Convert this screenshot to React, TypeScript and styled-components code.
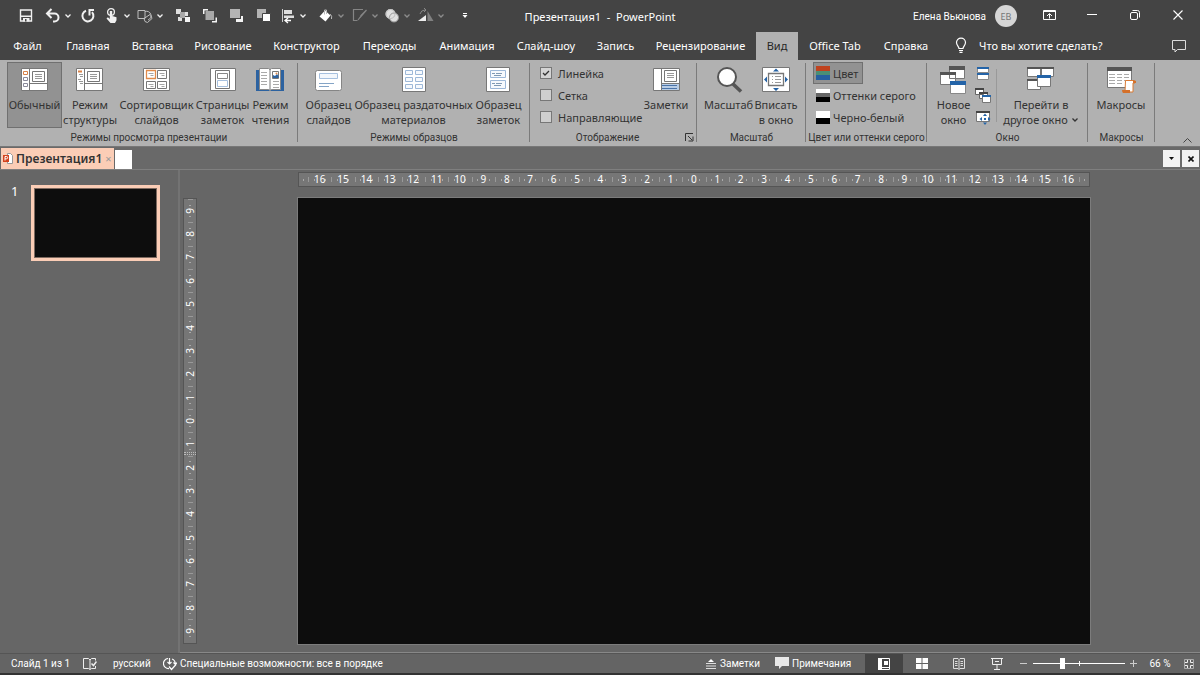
import React from "react";
import styled, { createGlobalStyle } from "styled-components";

const smallFont = `font-family: Roboto, "Noto Sans", sans-serif; font-size: 10px;`;

const GlobalStyle = createGlobalStyle`
  *, *::before, *::after { box-sizing: border-box; }
  html, body, #root { height: 100%; }
  body {
    margin: 0;
    background: #666;
    color: #fff;
    font-family: "Noto Sans", "Open Sans", sans-serif;
    font-size: 11px;
  }
  button, input { font: inherit; color: inherit; margin: 0; }
  button { border: 0; background: none; padding: 0; cursor: default; }
  svg { display: block; flex: none; }
`;

const Window = styled.div`
  display: flex;
  flex-direction: column;
  min-height: 100%;
`;

/* Title bar */
const TitleBar = styled.header`
  display: grid;
  grid-template-columns: 1fr auto 1fr;
  align-items: center;
  height: 32px;
  background: #444;
`;
const QuickAccess = styled.div`
  display: flex;
  align-items: center;
  padding-left: 17px;
`;
const QuickButton = styled.button<{ $width: number; $dim?: boolean }>`
  display: flex;
  align-items: center;
  gap: 2px;
  flex: none;
  width: ${(p) => p.$width}px;
  height: 32px;
  color: ${(p) => (p.$dim ? "#8c8c8c" : "#f0f0f0")};
`;
const WindowTitle = styled.h1`
  margin: 0;
  font-size: 11px;
  font-weight: 400;
  white-space: pre;
`;
const TitleRight = styled.div`
  display: flex;
  align-items: center;
  justify-content: flex-end;
`;
const Avatar = styled.button`
  width: 22px;
  height: 22px;
  margin: 0 11px 0 9px;
  border-radius: 50%;
  background: #d6d6d6;
  color: #777;
  font-size: 9px;
`;
const UserName = styled.span`
  ${smallFont}
`;
const WindowButton = styled.button`
  display: grid;
  place-items: center;
  width: 43px;
  height: 30px;
`;

/* Ribbon tabs */
const TabBar = styled.nav`
  display: flex;
  height: 28px;
  background: #444;
`;
const Tab = styled.button<{ $width: number; $active?: boolean }>`
  width: ${(p) => p.$width}px;
  flex: none;
  padding-bottom: 2px;
  white-space: nowrap;
  background: ${(p) => (p.$active ? "#b1b1b1" : "transparent")};
  color: ${(p) => (p.$active ? "#262626" : "#fff")};
`;
const TellMe = styled.label`
  display: flex;
  align-items: center;
  flex: 1;
  gap: 11px;
  padding: 0 0 2px 14px;
`;
const TellMeInput = styled.input`
  flex: 1;
  min-width: 0;
  padding: 0;
  border: 0;
  outline: 0;
  background: none;
  &::placeholder { color: #fff; opacity: 1; }
`;
const CommentButton = styled.button`
  display: grid;
  place-items: center;
  width: 42px;
`;

/* Ribbon */
const Ribbon = styled.section`
  display: flex;
  height: 87px;
  background: #b1b1b1;
  border-bottom: 1px solid #777;
  color: #333;
`;
const Group = styled.div<{ $width: number }>`
  position: relative;
  display: flex;
  flex-direction: column;
  flex: none;
  width: ${(p) => p.$width}px;
  padding-top: 2px;
  &::after {
    content: "";
    position: absolute;
    right: 0;
    top: 3px;
    width: 1px;
    height: 79px;
    background: #7b7b7b;
  }
`;
const GroupBody = styled.div<{ $indent: number }>`
  display: flex;
  height: 68px;
  padding-left: ${(p) => p.$indent}px;
`;
const GroupFooter = styled.div`
  display: flex;
  align-items: center;
  height: 17px;
`;
const GroupName = styled.div`
  flex: 1;
  text-align: center;
  ${smallFont}
  line-height: 16px;
  white-space: nowrap;
`;
const LauncherButton = styled.button`
  width: 12px;
`;
const BigButton = styled.button<{ $width: number; $active?: boolean }>`
  display: flex;
  flex-direction: column;
  align-items: center;
  gap: 2px;
  flex: none;
  width: ${(p) => p.$width}px;
  height: 66px;
  padding-top: 2px;
  border: 1px solid ${(p) => (p.$active ? "#707070" : "transparent")};
  background: ${(p) => (p.$active ? "#929292" : "transparent")};
`;
const BigLabel = styled.span`
  display: flex;
  flex-direction: column;
  align-items: center;
  line-height: 15px;
  white-space: nowrap;
`;
const LabelLine = styled.span`
  display: flex;
  align-items: center;
  gap: 3px;
`;
const Stack = styled.div<{ $width: number }>`
  display: flex;
  flex-direction: column;
  flex: none;
  align-items: flex-start;
  width: ${(p) => p.$width}px;
`;
const CheckRow = styled.label`
  display: flex;
  align-items: center;
  gap: 6px;
  height: 22px;
  white-space: nowrap;
`;
const CheckBox = styled.input`
  appearance: none;
  width: 12px;
  height: 12px;
  border: 1px solid #777;
  background: #cfcfcf;
  &:checked {
    background: #d4d4d4 url("data:image/svg+xml,%3Csvg xmlns='http://www.w3.org/2000/svg' viewBox='0 0 10 10'%3E%3Cpath d='M2 5l2 2 4-4' fill='none' stroke='%23333' stroke-width='1.3'/%3E%3C/svg%3E");
  }
`;
const SmallButton = styled.button<{ $active?: boolean }>`
  display: flex;
  align-items: center;
  gap: 3px;
  height: 22px;
  padding: 0 4px 0 2px;
  white-space: nowrap;
  border: 1px solid ${(p) => (p.$active ? "#707070" : "transparent")};
  background: ${(p) => (p.$active ? "#929292" : "transparent")};
`;
const IconButton = styled.button`
  display: grid;
  place-items: center;
  width: 18px;
  height: 22px;
`;
const Divider = styled.div`
  width: 1px;
  height: 53px;
  margin: 7px 4px 0;
  background: #999;
`;
const CollapseButton = styled.button`
  align-self: flex-end;
  margin-left: auto;
  padding: 0 7px 2px;
`;

/* Document tab strip */
const DocStrip = styled.div`
  display: flex;
  align-items: stretch;
  gap: 1px;
  height: 23px;
  padding: 1px 1px 0;
  background: #696969;
  border-bottom: 1px solid #7f7f7f;
`;
const DocTab = styled.button`
  display: flex;
  align-items: center;
  gap: 3px;
  width: 113px;
  padding-left: 2px;
  background: #fbcdb6;
  color: #333;
  font-size: 12px;
  font-weight: 600;
`;
const DocClose = styled.span`
  margin-left: auto;
  padding-right: 3px;
  color: #999;
  font-size: 11px;
  font-weight: 400;
`;
const NewDoc = styled.button`
  width: 17px;
  margin-top: 2px;
  background: #fff;
`;
const DocTools = styled.div`
  display: flex;
  gap: 2px;
  margin-left: auto;
  padding: 2px 0 0;
`;
const DocTool = styled.button`
  display: grid;
  place-items: center;
  width: 17px;
  height: 17px;
  background: #f2f2f2;
  color: #111;
`;

/* Work area */
const Workspace = styled.main`
  display: flex;
  flex: 1;
  background: #666;
`;
const Thumbnails = styled.aside`
  display: flex;
  align-items: flex-start;
  gap: 12px;
  flex: none;
  width: 180px;
  padding: 15px 0 0 11px;
  border-right: 2px solid #737373;
`;
const ThumbNumber = styled.span`
  width: 8px;
  font-size: 13px;
  line-height: 13px;
`;
const Thumb = styled.button`
  width: 129px;
  height: 76px;
  border: 3px solid #fbcdb6;
  outline: 1px solid #7d6a60;
  outline-offset: -4px;
  background: #0d0d0d;
`;
const Editor = styled.section`
  display: grid;
  flex: 1;
  grid-template-columns: 14px 1fr;
  grid-template-rows: 15px auto;
  column-gap: 101px;
  row-gap: 11px;
  align-content: start;
  padding: 2px 110px 8px 3px;
  border-bottom: 1px solid #888;
`;
const HRuler = styled.div`
  grid-column: 2;
  display: flex;
  padding: 0 9px;
  border: 1px solid #555;
  background: linear-gradient(#aaa, #aaa) 4px 50% / 1px 2px no-repeat,
    linear-gradient(#aaa, #aaa) calc(100% - 4px) 50% / 1px 2px no-repeat, #767676;
`;
const HCell = styled.span`
  flex: 1 1 0;
  min-width: 0;
  text-align: center;
  font-size: 10px;
  line-height: 12px;
  background: linear-gradient(#999, #999) 0 50% / 1px 5px no-repeat,
    linear-gradient(#aaa, #aaa) 25% 50% / 1px 2px no-repeat,
    linear-gradient(#aaa, #aaa) 75% 50% / 1px 2px no-repeat;
  &:last-child {
    background: linear-gradient(#999, #999) 0 50% / 1px 5px no-repeat,
      linear-gradient(#999, #999) 100% 50% / 1px 5px no-repeat,
      linear-gradient(#aaa, #aaa) 25% 50% / 1px 2px no-repeat,
      linear-gradient(#aaa, #aaa) 75% 50% / 1px 2px no-repeat;
  }
`;
const VRuler = styled.div`
  position: relative;
  display: flex;
  flex-direction: column;
  border: 1px solid #555;
  background: #767676;
`;
const VCell = styled.span`
  display: grid;
  place-items: center;
  flex: 1 1 0;
  min-height: 0;
  font-size: 10px;
  line-height: 12px;
  background: linear-gradient(#999, #999) 50% 0 / 5px 1px no-repeat,
    linear-gradient(#aaa, #aaa) 50% 25% / 2px 1px no-repeat,
    linear-gradient(#aaa, #aaa) 50% 75% / 2px 1px no-repeat;
`;
const VNumber = styled.span`
  writing-mode: vertical-rl;
  transform: rotate(180deg);
`;
const VMarker = styled.div`
  position: absolute;
  left: 0;
  right: 0;
  top: 57%;
  height: 3px;
  border: 1px dotted #bbb;
  border-width: 1px 0;
`;
const Slide = styled.div`
  aspect-ratio: 16 / 9;
  background: #0d0d0d;
  outline: 1px solid #7c7c7c;
`;

/* Status bar */
const StatusBar = styled.footer`
  display: flex;
  align-items: center;
  height: 22px;
  padding-left: 11px;
  background: #646464;
  border-top: 1px solid #555;
  border-bottom: 2px solid #333;
  ${smallFont}
`;
const StatusText = styled.span<{ $width: number }>`
  flex: none;
  width: ${(p) => p.$width}px;
  white-space: nowrap;
`;
const StatusButton = styled.button<{ $width: number }>`
  display: flex;
  align-items: center;
  gap: 3px;
  flex: none;
  width: ${(p) => p.$width}px;
  white-space: nowrap;
`;
const StatusRight = styled.div`
  display: flex;
  align-items: center;
  align-self: stretch;
  margin-left: auto;
`;
const ViewButton = styled.button<{ $width: number; $active?: boolean }>`
  display: grid;
  place-items: center;
  align-self: stretch;
  width: ${(p) => p.$width}px;
  background: ${(p) => (p.$active ? "#444" : "transparent")};
`;
const ZoomRange = styled.input`
  appearance: none;
  width: 92px;
  height: 16px;
  background: linear-gradient(#fff, #fff) 50% 50% / 1px 5px no-repeat,
    linear-gradient(#fff, #fff) 50% 50% / 100% 1px no-repeat;
  &::-webkit-slider-thumb {
    appearance: none;
    width: 5px;
    height: 11px;
    background: #fff;
  }
`;

const Chevron = ({ size = 8 }: { size?: number }) => (
  <svg width={size} height={size} viewBox="0 0 8 8" fill="none" stroke="currentColor" strokeWidth="1.3">
    <path d="M1.500 2.500L4 5l2.500-2.500" />
  </svg>
);

type QuickItem = { name: string; width: number; menu?: boolean; dim?: boolean; art: React.ReactNode };

const quickItems: QuickItem[] = [
  {
    name: "Сохранить", width: 27,
    art: <><path d="M3.500 3h11v11h-11z" fill="none" stroke="currentColor" strokeWidth="1.400" /><path d="M4 8.500h10V10H4zM6 11h6.500v3.500H6z" fill="currentColor" /><path d="M8 12h1.500v2.500H8z" fill="#444" /></>,
  },
  {
    name: "Отменить", width: 35, menu: true,
    art: <path d="M7.500 2L3 6.500 7.500 11M3.500 6.500h7a4 4 0 0 1 0 8H9" fill="none" stroke="currentColor" strokeWidth="2" />,
  },
  {
    name: "Повторить", width: 24,
    art: <path d="M7 3.700A5.500 5.500 0 1 0 13 5.200M9.500 3h5.500M10.500 3v5.500" fill="none" stroke="currentColor" strokeWidth="2" />,
  },
  {
    name: "Режим сенсорного управления", width: 33, menu: true,
    art: <><circle cx="8" cy="5" r="3.400" fill="none" stroke="currentColor" strokeWidth="1.300" /><path d="M6.800 4h2.400v5l4.300 1.200v3L12 16H7.500L3.500 11.500l1.400-1.200L6.800 12z" fill="currentColor" /></>,
  },
  {
    name: "Фигуры", width: 38, menu: true,
    art: <path d="M2 3.500h7v8H2zM9 4.500a4.500 4.500 0 1 1 3 8.500M14 7.500l-6 4 1 3 2.500 1 4.500-4-1-3z" fill="none" stroke="#bdbdbd" strokeWidth="1" />,
  },
  {
    name: "Группировать", width: 27,
    art: <><path d="M2 2h5v5H2zM10 5h4v4h-4zM4 10h4v4H4z" fill="#dedede" /><path d="M6 5h5v6H6z" fill="#a8a8a8" /><path d="M11 10h5v5h-5z" fill="#f4f4f4" /></>,
  },
  {
    name: "На передний план", width: 26,
    art: <><path d="M2 2h5v1.500H3.500V7H2zM16 15.500h-5V14h3.500v-3.500H16z" fill="#f4f4f4" /><path d="M4.500 4H13v9H4.500z" fill="#a8a8a8" /></>,
  },
  {
    name: "Переместить вперед", width: 27,
    art: <><path d="M3 2h10v9H3z" fill="#b4b4b4" /><path d="M16 9v6h-7v-3h5V9z" fill="#f4f4f4" /></>,
  },
  {
    name: "Переместить назад", width: 25,
    art: <><path d="M3 2h9v9H3z" fill="#b4b4b4" /><path d="M8.500 6.500h8v8h-8z" fill="#fff" stroke="#444" /></>,
  },
  {
    name: "Выровнять", width: 38, menu: true,
    art: <><path d="M3.500 2v13" stroke="#ccc" /><path d="M5 3h8v4H5zM5 8.500h10V11H5z" fill="#ddd" /><path d="M9 11l-3 2.500L9 16M6 13.500h6" fill="none" stroke="#fff" strokeWidth="1.300" /></>,
  },
  {
    name: "Заливка", width: 34, menu: true, dim: true,
    art: <><path d="M8 3.500l5.500 5-5 6-6-5z" fill="#fff" /><path d="M7.500 7.500V3h2v4M13 7q2.500 2 1.500 5" fill="none" stroke="#bbb" /></>,
  },
  {
    name: "Контур", width: 32, menu: true, dim: true,
    art: <path d="M12 2.500H2.500v11h4M15.500 3L9 10.500l-2 2.500M15.500 3l-6 6" fill="none" stroke="#858585" strokeWidth="1.200" />,
  },
  {
    name: "Объединить фигуры", width: 34, menu: true, dim: true,
    art: <><circle cx="7.500" cy="7" r="5" fill="#e0e0e0" /><circle cx="11" cy="10.500" r="4.500" fill="#e0e0e0" stroke="#999" /><circle cx="7.500" cy="7" r="4.500" fill="none" stroke="#bbb" /></>,
  },
  {
    name: "Повернуть", width: 43, menu: true, dim: true,
    art: <><path d="M9 8v6H1z" fill="#eee" /><path d="M10.500 4l6 10h-6z" fill="#808080" /><path d="M3 7q1-4 5-4M7 1l2 2-2 2" fill="none" stroke="#888" /></>,
  },
];

const tabs: [string, number][] = [
  ["Файл", 55], ["Главная", 66], ["Вставка", 63], ["Рисование", 78], ["Конструктор", 89],
  ["Переходы", 77], ["Анимация", 78], ["Слайд-шоу", 80], ["Запись", 59], ["Рецензирование", 111],
  ["Вид", 42], ["Office Tab", 74], ["Справка", 68],
];

const art = {
  normal: <><path d="M2.500 3.500h26v22h-26z" fill="#fff" stroke="#777" /><path d="M10.500 4v21M11 18.500h17" stroke="#777" /><path d="M13.500 6.500h12v10h-12z" fill="#fff" stroke="#777" /><path d="M16 9.500h7M16 11.500h7M16 13.500h7" stroke="#999" /><path d="M4.500 6.500h4v3h-4z" fill="#fff" stroke="#d98248" /><path d="M4.500 12.500h4v3h-4zM4.500 18.500h4v3h-4z" fill="#fff" stroke="#8a8a9a" /></>,
  outline: <><path d="M2.500 3.500h26v22h-26z" fill="#fff" stroke="#777" /><path d="M10.500 4v21M11 18.500h17" stroke="#777" /><path d="M13.500 6.500h12v10h-12z" fill="#fff" stroke="#777" /><path d="M16 9.500h7M16 11.500h7M16 13.500h7" stroke="#999" /><path d="M4 6.500h4" stroke="#d98248" strokeWidth="2" /><path d="M5 9.500h4M6 11.500h3M4 14.500h3M5 16.500h4M6 18.500h3" stroke="#999" /></>,
  sorter: <><path d="M2.500 3.500h26v22h-26z" fill="#fff" stroke="#777" /><path d="M5.500 5.500h9v8h-9z" fill="#fff" stroke="#e08a4a" strokeWidth="1.300" /><path d="M16.500 5.500h9v8h-9zM5.500 16.500h9v7h-9zM16.500 16.500h9v7h-9z" fill="#fff" stroke="#777" /><path d="M7.500 8.500h5M9.500 10.500h3M18.500 8.500h5M20.500 10.500h3M7.500 19.500h5M9.500 21.500h3M18.500 19.500h5M20.500 21.500h3" stroke="#a5a5a5" /></>,
  notesPage: <><path d="M3.500 3.500h25v22h-25z" fill="#fff" stroke="#777" /><path d="M8.500 5.500h14v18h-14z" fill="#fff" stroke="#777" /><path d="M10.500 8.500h10v5h-10z" fill="#fff" stroke="#888" /><path d="M10.500 15.500h10v6h-10z" fill="#fff" stroke="#a6c0df" /></>,
  reading: <><path d="M1 5h28v21H1z" fill="#2c62a0" /><path d="M4.500 3.500h9l1.500 1 1.500-1h9v21h-9l-1.500 1-1.500-1h-9z" fill="#fff" stroke="#888" /><path d="M15 4v21" stroke="#777" /><path d="M6 7.500h6M6 10.500h6M6 13.500h6M6 16.500h6M6 19.500h6M18 16.500h6M18 19.500h6M18 22.500h6" stroke="#aaa" /><path d="M17.500 6.500h6v7h-6z" fill="#fff" stroke="#777" /><path d="M18 13v-3l2 1 2-2 1.500 2v2z" fill="#2c62a0" /><circle cx="21.500" cy="8.500" r="1" fill="#e08a4a" /></>,
  slideMaster: <><rect x="2.500" y="5.500" width="26" height="20" rx="2" fill="#fff" stroke="#858585" /><path d="M6.500 8.500h18v5h-18z" fill="#f3f7fc" stroke="#a6c0df" /><path d="M6 18.500h15M6 21.500h10" stroke="#84a4c6" /></>,
  handout: <><path d="M4.500 2.500h23v24h-23z" fill="#fff" stroke="#777" /><path d="M7.500 5.500h7v4h-7zM17.500 5.500h7v4h-7zM7.500 12.500h7v4h-7zM17.500 12.500h7v4h-7zM7.500 19.500h7v4h-7zM17.500 19.500h7v4h-7z" fill="#f6f9fd" stroke="#9db8d8" /></>,
  notesMaster: <><path d="M3.500 2.500h23v24h-23z" fill="#fff" stroke="#777" /><path d="M7.500 5.500h15v7h-15zM7.500 15.500h15v8h-15z" fill="#f6f9fd" stroke="#9db8d8" /><path d="M9 8.500h3M13 8.500h6M11 10.500h7M9 18.500h3M13 18.500h6M11 20.500h7" stroke="#7f99b4" /></>,
  notes: <><path d="M3.500 3.500h26v22h-26z" fill="#fff" stroke="#777" /><path d="M11.500 4v21M12 18.500h17" stroke="#777" /><path d="M14.500 5.500h12v11h-12z" fill="#fff" stroke="#777" /><path d="M17 8.500h7M17 10.500h7M17 12.500h7" stroke="#999" /><path d="M12 19h17v6H12z" fill="#b8cde6" /><path d="M12 20.500h15M12 23.500h15" stroke="#4a73a8" /></>,
  zoom: <><path d="M20 19l8 7.500" stroke="#555" strokeWidth="3.600" /><circle cx="14" cy="12" r="9" fill="#fff" stroke="#555" strokeWidth="2" /></>,
  fit: <><path d="M2.500 2.500h27v24h-27z" fill="#fff" stroke="#777" /><path d="M8.500 8.500h15v12h-15z" fill="#fff" stroke="#777" strokeWidth="1.300" /><path d="M12 11.500h1M15 11.500h6M12 14.500h1M15 14.500h6M12 17.500h1M15 17.500h6" stroke="#999" /><path d="M13 6.500l3-3 3 3zM13 23l3 3 3-3zM7 11.500v6l-3-3zM25 11.500v6l3-3z" fill="#2562a4" /></>,
  newWindow: <><path d="M11.500 1.500h15v12h-15zM2.500 7.500h15v12h-15z" fill="#fff" stroke="#777" /><path d="M11 1h16v4H11zM2 7h16v3H2z" fill="#555" /><path d="M12.500 17.500h15v11h-15z" fill="#fff" stroke="#888" /><path d="M12 16h16v4H12z" fill="#2464a8" /></>,
  switchWindow: <><path d="M2.500 2.500h13v9h-13zM16.500 2.500h12v9h-12zM2.500 15.500h13v9h-13z" fill="#fff" stroke="#777" /><path d="M2 2h14v2H2zM16 2h13v2H16zM2 14h14v2H2z" fill="#555" /><path d="M12.500 11.500h13v10h-13z" fill="#fff" stroke="#777" /><path d="M12 10h14v3H12z" fill="#2464a8" /></>,
  macros: <><path d="M2.500 3.500h24v19h-24z" fill="#fff" stroke="#777" /><path d="M2 2h25v4H2z" fill="#555" /><path d="M4 9.500h6M12 9.500h5M19 9.500h5M4 12.500h6M12 12.500h5M19 12.500h5M4 15.500h6M12 15.500h5M19 15.500h5M4 18.500h6M12 18.500h5" stroke="#aaa" /><path d="M20.500 15.500h8q2 0 1.500 2.500h-2v9h-8z" fill="#fff" stroke="#d97a33" /><path d="M17 25h8v3h-7q-1-1-1-3zM28 15l3 1v2h-3z" fill="#d4702a" /></>,
};

type BigProps = { lines: string[]; width: number; icon: React.ReactNode; active?: boolean; menu?: boolean };

function Big({ lines, width, icon, active, menu }: BigProps) {
  return (
    <BigButton $width={width} $active={active} aria-pressed={active}>
      <svg width="32" height="30" viewBox="0 0 32 30">{icon}</svg>
      <BigLabel>
        {lines.map((line, i) => (
          <LabelLine key={line}>
            {line}
            {menu && i === lines.length - 1 && <Chevron />}
          </LabelLine>
        ))}
      </BigLabel>
    </BigButton>
  );
}

const hNumbers = Array.from({ length: 33 }, (_, i) => Math.abs(i - 16));
const vNumbers = Array.from({ length: 19 }, (_, i) => Math.abs(i - 9));

export default function App() {
  return (
    <>
      <GlobalStyle />
      <Window>
        <TitleBar>
          <QuickAccess>
            {quickItems.map((item) => (
              <QuickButton key={item.name} $width={item.width} $dim={item.dim} aria-label={item.name}>
                <svg width="18" height="18" viewBox="0 0 18 18">{item.art}</svg>
                {item.menu && <Chevron />}
              </QuickButton>
            ))}
            <QuickButton $width={10} aria-label="Настройка панели быстрого доступа">
              <svg width="10" height="10" viewBox="0 0 10 10"><path d="M3 2h4v1H3zM2.500 4h5L5 7z" fill="#fff" /></svg>
            </QuickButton>
          </QuickAccess>
          <WindowTitle>{"Презентация1  -  PowerPoint"}</WindowTitle>
          <TitleRight>
            <UserName>Елена Вьюнова</UserName>
            <Avatar aria-label="Учетная запись">ЕВ</Avatar>
            <WindowButton aria-label="Параметры отображения ленты">
              <svg width="14" height="14" viewBox="0 0 14 14" fill="none" stroke="#fff"><path d="M.500 1.500h12v9H.500zM.500 2.500h12M6.500 9.500V5M4 7l2.500-2.500L9 7" /></svg>
            </WindowButton>
            <WindowButton aria-label="Свернуть">
              <svg width="12" height="12" viewBox="0 0 12 12"><path d="M0 4.500h10" stroke="#fff" /></svg>
            </WindowButton>
            <WindowButton aria-label="Восстановить">
              <svg width="14" height="14" viewBox="0 0 14 14" fill="none" stroke="#fff"><rect x="1.500" y="3.500" width="7" height="7" rx="1.500" /><path d="M3.500 1.500h5a2 2 0 0 1 2 2v5" /></svg>
            </WindowButton>
            <WindowButton aria-label="Закрыть">
              <svg width="12" height="12" viewBox="0 0 12 12"><path d="M.500.500l9 9M9.500.500l-9 9" stroke="#fff" strokeWidth="1.100" /></svg>
            </WindowButton>
          </TitleRight>
        </TitleBar>

        <TabBar>
          {tabs.map(([name, width]) => (
            <Tab key={name} $width={width} $active={name === "Вид"}>{name}</Tab>
          ))}
          <TellMe>
            <svg width="14" height="16" viewBox="0 0 14 16" fill="none" stroke="#fff" strokeWidth="1.200"><path d="M5 11.500c0-2-2.500-3-2.500-5.900a4.500 4.500 0 0 1 9 0c0 2.900-2.500 3.900-2.500 5.900zM5 13.500h4M5.500 15.300h3" /></svg>
            <TellMeInput aria-label="Поиск команд" placeholder="Что вы хотите сделать?" />
          </TellMe>
          <CommentButton aria-label="Примечания">
            <svg width="16" height="14" viewBox="0 0 16 14" fill="none" stroke="#ddd"><path d="M1.500 1.500h13v9H6.500L4 13v-2.500H1.500z" /></svg>
          </CommentButton>
        </TabBar>

        <Ribbon>
          <Group $width={298}>
            <GroupBody $indent={7}>
              <Big lines={["Обычный"]} width={55} icon={art.normal} active />
              <Big lines={["Режим", "структуры"]} width={56} icon={art.outline} />
              <Big lines={["Сортировщик", "слайдов"]} width={77} icon={art.sorter} />
              <Big lines={["Страницы", "заметок"]} width={55} icon={art.notesPage} />
              <Big lines={["Режим", "чтения"]} width={41} icon={art.reading} />
            </GroupBody>
            <GroupFooter><GroupName>Режимы просмотра презентации</GroupName></GroupFooter>
          </Group>

          <Group $width={232}>
            <GroupBody $indent={5}>
              <Big lines={["Образец", "слайдов"]} width={51} icon={art.slideMaster} />
              <Big lines={["Образец раздаточных", "материалов"]} width={119} icon={art.handout} />
              <Big lines={["Образец", "заметок"]} width={51} icon={art.notesMaster} />
            </GroupBody>
            <GroupFooter><GroupName>Режимы образцов</GroupName></GroupFooter>
          </Group>

          <Group $width={167}>
            <GroupBody $indent={10}>
              <Stack $width={100}>
                <CheckRow><CheckBox type="checkbox" defaultChecked />Линейка</CheckRow>
                <CheckRow><CheckBox type="checkbox" />Сетка</CheckRow>
                <CheckRow><CheckBox type="checkbox" />Направляющие</CheckRow>
              </Stack>
              <Big lines={["Заметки"]} width={52} icon={art.notes} />
            </GroupBody>
            <GroupFooter>
              <GroupName>Отображение</GroupName>
              <LauncherButton aria-label="Параметры сетки">
                <svg width="9" height="9" viewBox="0 0 9 9" fill="none" stroke="#333"><path d="M.500 8V.500H8M3 3l4 4M8 3.500V8H3.500" /></svg>
              </LauncherButton>
            </GroupFooter>
          </Group>

          <Group $width={109}>
            <GroupBody $indent={7}>
              <Big lines={["Масштаб"]} width={49} icon={art.zoom} />
              <Big lines={["Вписать", "в окно"]} width={46} icon={art.fit} />
            </GroupBody>
            <GroupFooter><GroupName>Масштаб</GroupName></GroupFooter>
          </Group>

          <Group $width={121}>
            <GroupBody $indent={7}>
              <Stack $width={112}>
                <SmallButton $active aria-pressed>
                  <svg width="14" height="14" viewBox="0 0 14 14"><path d="M0 0h14v5H0z" fill="#c0431f" /><path d="M0 5h14v4H0z" fill="#4c8f75" /><path d="M0 9h14v5H0z" fill="#2760a0" /></svg>
                  Цвет
                </SmallButton>
                <SmallButton>
                  <svg width="14" height="14" viewBox="0 0 14 14"><path d="M0 1h14v4H0z" fill="#fff" /><path d="M0 5h14v4H0z" fill="#666" /><path d="M0 9h14v5H0z" fill="#000" /></svg>
                  Оттенки серого
                </SmallButton>
                <SmallButton>
                  <svg width="14" height="14" viewBox="0 0 14 14"><path d="M0 1h14v7H0z" fill="#fff" /><path d="M0 8h14v6H0z" fill="#000" /></svg>
                  Черно-белый
                </SmallButton>
              </Stack>
            </GroupBody>
            <GroupFooter><GroupName>Цвет или оттенки серого</GroupName></GroupFooter>
          </Group>

          <Group $width={161}>
            <GroupBody $indent={6}>
              <Big lines={["Новое", "окно"]} width={41} icon={art.newWindow} />
              <Stack $width={18}>
                <IconButton aria-label="Упорядочить все">
                  <svg width="16" height="16" viewBox="0 0 16 16"><path d="M2.500 2.500h11v5h-11zM2.500 9.500h11v5h-11z" fill="#fff" stroke="#888" /><path d="M2 2h12v2H2zM2 8h12v2H2z" fill="#2464a8" /></svg>
                </IconButton>
                <IconButton aria-label="Каскадом">
                  <svg width="16" height="16" viewBox="0 0 16 16"><path d="M.500 1.500h8v6h-8zM4.500 5.500h8v6h-8z" fill="#fff" stroke="#666" /><path d="M0 1h9v2H0zM4 5h9v2H4z" fill="#444" /><path d="M7.500 9.500h8v6h-8z" fill="#fff" stroke="#777" /><path d="M7 8h9v2H7z" fill="#2464a8" /></svg>
                </IconButton>
                <IconButton aria-label="Перемещение границы">
                  <svg width="16" height="16" viewBox="0 0 16 16"><path d="M1.500 2.500h13v10h-13z" fill="#fff" stroke="#777" /><path d="M1 2h14v2H1z" fill="#444" /><path d="M10 4.500l2 2.500H8zM10 16l2-2.500H8zM4.500 10L7 8v4zM15.500 10L13 8v4zM9 9h2v2H9z" fill="#2464a8" /></svg>
                </IconButton>
              </Stack>
              <Divider />
              <Big lines={["Перейти в", "другое окно"]} width={80} icon={art.switchWindow} menu />
            </GroupBody>
            <GroupFooter><GroupName>Окно</GroupName></GroupFooter>
          </Group>

          <Group $width={67}>
            <GroupBody $indent={6}>
              <Big lines={["Макросы"]} width={54} icon={art.macros} />
            </GroupBody>
            <GroupFooter><GroupName>Макросы</GroupName></GroupFooter>
          </Group>
          <CollapseButton aria-label="Свернуть ленту">
            <svg width="11" height="8" viewBox="0 0 11 8" fill="none" stroke="#444"><path d="M1.500 6.500l4-4 4 4" /></svg>
          </CollapseButton>
        </Ribbon>

        <DocStrip>
          <DocTab>
            <svg width="10" height="11" viewBox="0 0 10 11"><path d="M4.500.500h3l2 2v8h-5z" fill="#fff" stroke="#999" /><path d="M0 2h6v7H0z" fill="#d3431e" /><path d="M2 7.500v-4h1.500a1 1 0 0 1 0 2.300H2" fill="none" stroke="#fff" /></svg>
            Презентация1
            <DocClose>×</DocClose>
          </DocTab>
          <NewDoc aria-label="Новая презентация" />
          <DocTools>
            <DocTool aria-label="Список вкладок">
              <svg width="5" height="3" viewBox="0 0 5 3"><path d="M0 0h5L2.500 3z" fill="#111" /></svg>
            </DocTool>
            <DocTool aria-label="Закрыть вкладку">
              <svg width="6" height="6" viewBox="0 0 6 6"><path d="M.500.500l5 5M5.500.500l-5 5" stroke="#111" strokeWidth="1.600" /></svg>
            </DocTool>
          </DocTools>
        </DocStrip>

        <Workspace>
          <Thumbnails>
            <ThumbNumber>1</ThumbNumber>
            <Thumb aria-label="Слайд 1" />
          </Thumbnails>
          <Editor>
            <HRuler>{hNumbers.map((n, i) => <HCell key={i}>{n}</HCell>)}</HRuler>
            <VRuler>
              {vNumbers.map((n, i) => <VCell key={i}><VNumber>{n}</VNumber></VCell>)}
              <VMarker />
            </VRuler>
            <Slide />
          </Editor>
        </Workspace>

        <StatusBar>
          <StatusText $width={72}>Слайд 1 из 1</StatusText>
          <StatusButton $width={30} aria-label="Проверка правописания">
            <svg width="14" height="12" viewBox="0 0 14 12" fill="none" stroke="#eee"><path d="M7 2v9.500M7 2L5.500.500h-5v10h5L7 11.500l1.500-1h4V8M7 2L8.500.500h4v2" /><path d="M8.500 5.500l2 2 3-4" strokeWidth="1.500" /></svg>
          </StatusButton>
          <StatusText $width={50}>русский</StatusText>
          <StatusButton $width={220}>
            <svg width="14" height="14" viewBox="0 0 14 14" fill="none" stroke="#fff" strokeWidth="1.200"><path d="M5 1.500a5 5 0 0 0 1 10M6.500 1v6M4.500 5l2 2 2-2M9 2q3 1 3.500 5M6 9.500l2.500 3 4.500-5M10.500 5.500l2 2 1.500-2" /></svg>
            Специальные возможности: все в порядке
          </StatusButton>
          <StatusRight>
            <StatusButton $width={70}>
              <svg width="12" height="12" viewBox="0 0 12 12"><path d="M6 1l3 3H3z" fill="#fff" /><path d="M1 5.500h10M1 8h10M1 10.500h10" stroke="#ddd" /></svg>
              Заметки
            </StatusButton>
            <StatusButton $width={90}>
              <svg width="14" height="13" viewBox="0 0 14 13"><path d="M0 0h14v9H7l-3 3V9H0z" fill="#e8e8e8" /></svg>
              Примечания
            </StatusButton>
            <ViewButton $width={38} $active aria-label="Обычный">
              <svg width="12" height="12" viewBox="0 0 12 12"><path d="M.500.500h11v11H.500zM3.500.500v11M3.500 9.500h8" fill="none" stroke="#fff" /><path d="M0 0h3v12H0zM6 3h4v4H6z" fill="#fff" /></svg>
            </ViewButton>
            <ViewButton $width={37} aria-label="Сортировщик слайдов">
              <svg width="12" height="11" viewBox="0 0 12 11"><path d="M0 0h5.500v5H0zM6.500 0H12v5H6.500zM0 6h5.500v5H0zM6.500 6H12v5H6.500z" fill="#fff" /></svg>
            </ViewButton>
            <ViewButton $width={38} aria-label="Режим чтения">
              <svg width="12" height="12" viewBox="0 0 12 12" fill="none" stroke="#ddd"><path d="M6 1.500v10M.500.500h4.500l1 1 1-1h4.500v10H7l-1 1-1-1H.500zM2 3.500h2.500M2 5.500h2.500M2 7.500h2.500M7.500 3.500H10M7.500 5.500H10M7.500 7.500H10" /></svg>
            </ViewButton>
            <ViewButton $width={37} aria-label="Показ слайдов">
              <svg width="12" height="12" viewBox="0 0 12 12" fill="none" stroke="#eee"><path d="M0 .500h12M1.500 1v5.500h9V1M4 3.500h4M6 7v4M3 11.500h6" /></svg>
            </ViewButton>
            <ViewButton $width={18} aria-label="Уменьшить">
              <svg width="8" height="8" viewBox="0 0 8 8"><path d="M0 3.500h7" stroke="#ccc" /></svg>
            </ViewButton>
            <ZoomRange type="range" aria-label="Масштаб" min={0} max={220} defaultValue={68} />
            <ViewButton $width={18} aria-label="Увеличить">
              <svg width="8" height="8" viewBox="0 0 8 8"><path d="M0 3.500h7M3.500 0v7" stroke="#ccc" /></svg>
            </ViewButton>
            <ViewButton $width={34}>66 %</ViewButton>
            <ViewButton $width={23} aria-label="Вписать слайд в окно">
              <svg width="10" height="10" viewBox="0 0 10 10" fill="none" stroke="#eee"><path d="M.500.500h9v9h-9z" stroke="#aaa" /><path d="M3.500 1v2.500H1M6.500 1v2.500H9M3.500 9V6.500H1M6.500 9V6.500H9" /></svg>
            </ViewButton>
          </StatusRight>
        </StatusBar>
      </Window>
    </>
  );
}
